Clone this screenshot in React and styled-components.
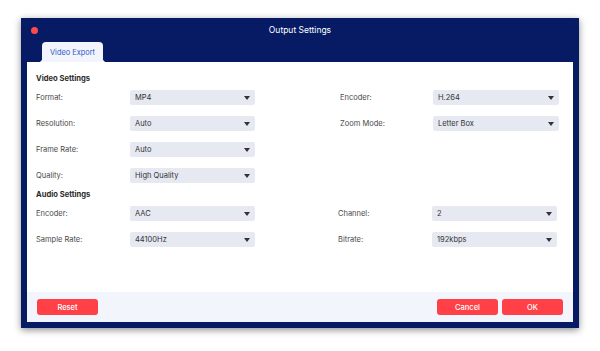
import React from 'react'
import styled, { createGlobalStyle } from 'styled-components'

const GlobalStyle = createGlobalStyle`
    body {
        margin: 0;
        background: #ffffff;
        font-family: Inter, "Liberation Sans", sans-serif;
    }
`

const Page = styled.div`
    width: 600px;
    height: 351px;
    padding: 18px 0 0 21px;
    box-sizing: border-box;
`

const Window = styled.div`
    width: 558px;
    height: 310px;
    background: #061b64;
    box-shadow: 0 2px 7px rgba(0, 0, 0, 0.45);
    display: flex;
    flex-direction: column;
    padding: 0 6px 6px;
    box-sizing: border-box;
`

const TitleBar = styled.div`
    height: 44px;
    display: flex;
    flex-direction: column;
    .top {
        height: 24px;
        display: flex;
        align-items: center;
        position: relative;
    }
    .dot {
        width: 7px;
        height: 7px;
        border-radius: 50%;
        background: #ff4a4a;
        margin-left: 3.5px;
    }
    .title {
        position: absolute;
        left: 0;
        right: 0;
        text-align: center;
        color: #ffffff;
        font-size: 8.5px;
        pointer-events: none;
    }
`

const Tab = styled.div`
    margin-left: 15px;
    width: 61px;
    height: 20px;
    background: #f2f5fb;
    border-radius: 4px 4px 0 0;
    color: #3556c8;
    font-size: 7.4px;
    display: flex;
    align-items: center;
    justify-content: center;
    position: relative;
    &::before, &::after {
        content: "";
        position: absolute;
        bottom: 0;
        width: 4px;
        height: 4px;
    }
    &::before {
        left: -4px;
        background: radial-gradient(circle at 0 0, transparent 4px, #f2f5fb 4.5px);
    }
    &::after {
        right: -4px;
        background: radial-gradient(circle at 100% 0, transparent 4px, #f2f5fb 4.5px);
    }
`

const Body = styled.div`
    flex: 1;
    background: #ffffff;
    padding: 11px 0 0 9px;
    display: flex;
    flex-direction: column;
`

const SectionTitle = styled.div`
    height: 12px;
    line-height: 12px;
    font-size: 7.6px;
    font-weight: 700;
    color: #2a2a2a;
    margin-bottom: 5px;
    margin-top: ${p => (p.$gap ? '1px' : '0')};
`

const Grid = styled.div`
    display: grid;
    grid-template-columns: ${p => p.$cols};
    row-gap: 11px;
    margin-bottom: 5px;
    align-items: center;
`

const Label = styled.div`
    font-size: 7.5px;
    color: #484848;
    grid-column-start: ${p => (p.$right ? 4 : 1)};
`

const SelectBox = styled.div`
    height: 15px;
    background: #e6e9f1;
    border-radius: 2px;
    display: flex;
    align-items: center;
    justify-content: space-between;
    padding: 0 5px 0 5px;
    box-sizing: border-box;
    font-size: 7.5px;
    color: #333;
    .arrow {
        width: 0;
        height: 0;
        border-left: 3.5px solid transparent;
        border-right: 3.5px solid transparent;
        border-top: 4px solid #333;
    }
`

const Footer = styled.div`
    height: 30px;
    background: #f2f6fc;
    display: flex;
    align-items: center;
    padding: 0 10px;
    gap: 4px;
    .spacer {
        flex: 1;
    }
`

const Button = styled.div`
    width: 61px;
    height: 16px;
    background: #ff4046;
    border-radius: 3px;
    color: #fff;
    font-size: 7.5px;
    font-weight: 500;
    display: flex;
    align-items: center;
    justify-content: center;
`

function Select({ value }) {
    return (
        <SelectBox>
            <span>{value}</span>
            <span className="arrow" />
        </SelectBox>
    )
}

export default function App() {
    return (
        <Page>
            <GlobalStyle />
            <Window>
                <TitleBar>
                    <div className="top">
                        <div className="dot" />
                        <div className="title">Output Settings</div>
                    </div>
                    <Tab>Video Export</Tab>
                </TitleBar>
                <Body>
                    <SectionTitle>Video Settings</SectionTitle>
                    <Grid $cols="94px 125px 85px 93px 126px">
                        <Label>Format:</Label>
                        <Select value="MP4" />
                        <Label $right>Encoder:</Label>
                        <Select value="H.264" />
                        <Label>Resolution:</Label>
                        <Select value="Auto" />
                        <Label $right>Zoom Mode:</Label>
                        <Select value="Letter Box" />
                        <Label>Frame Rate:</Label>
                        <Select value="Auto" />
                        <Label>Quality:</Label>
                        <Select value="High Quality" />
                    </Grid>
                    <SectionTitle $gap>Audio Settings</SectionTitle>
                    <Grid $cols="94px 125px 83px 94px 125px">
                        <Label>Encoder:</Label>
                        <Select value="AAC" />
                        <Label $right>Channel:</Label>
                        <Select value="2" />
                        <Label>Sample Rate:</Label>
                        <Select value="44100Hz" />
                        <Label $right>Bitrate:</Label>
                        <Select value="192kbps" />
                    </Grid>
                </Body>
                <Footer>
                    <Button>Reset</Button>
                    <div className="spacer" />
                    <Button>Cancel</Button>
                    <Button>OK</Button>
                </Footer>
            </Window>
        </Page>
    )
}
